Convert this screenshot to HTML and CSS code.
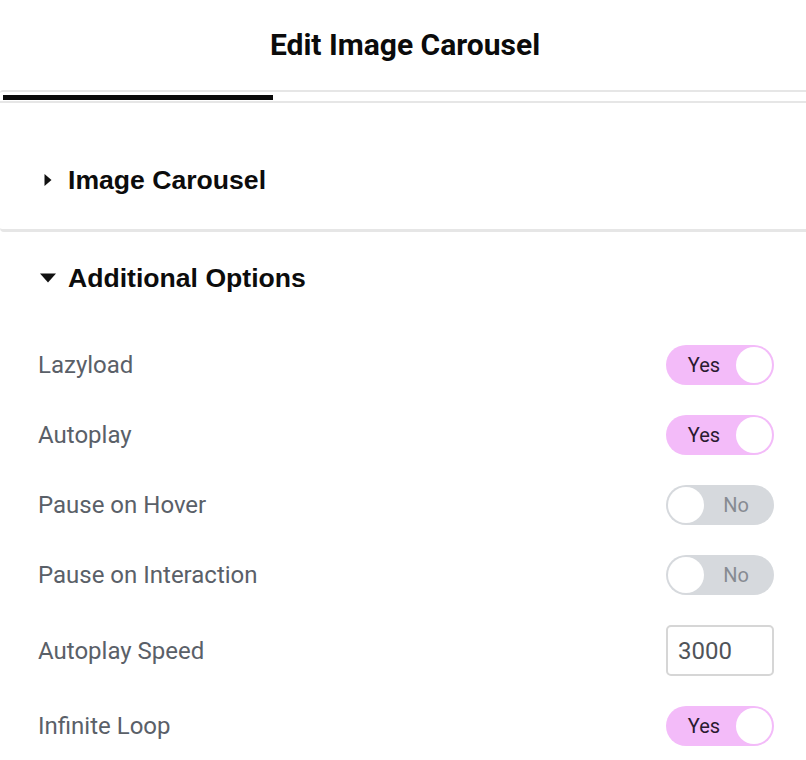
FILE: index.html
```html
<!DOCTYPE html>
<html lang="en">
<head>
<meta charset="utf-8">
<title>Edit Image Carousel</title>
<link rel="stylesheet" href="styles.css">
</head>
<body>
<div class="panel">
  <header class="panel-header">
    <h1 class="panel-title">Edit Image Carousel</h1>
  </header>
  <div class="tabs">
    <div class="tab-indicator"></div>
  </div>

  <section class="section section-collapsed">
    <h2 class="section-title">
      <svg class="caret caret-right" width="8" height="12" viewBox="0 0 8 12"><path d="M0.5 0 L7.5 6 L0.5 12 Z" fill="#111"/></svg>
      <span>Image Carousel</span>
    </h2>
  </section>

  <section class="section section-open">
    <h2 class="section-title">
      <svg class="caret caret-down" width="16" height="10" viewBox="0 0 16 10"><path d="M0 0.5 L16 0.5 L8 9.5 Z" fill="#111"/></svg>
      <span>Additional Options</span>
    </h2>

    <div class="controls">
      <div class="row">
        <span class="label">Lazyload</span>
        <div class="switch on"><span class="switch-text">Yes</span><span class="knob"></span></div>
      </div>
      <div class="row">
        <span class="label">Autoplay</span>
        <div class="switch on"><span class="switch-text">Yes</span><span class="knob"></span></div>
      </div>
      <div class="row">
        <span class="label">Pause on Hover</span>
        <div class="switch off"><span class="knob"></span><span class="switch-text">No</span></div>
      </div>
      <div class="row">
        <span class="label">Pause on Interaction</span>
        <div class="switch off"><span class="knob"></span><span class="switch-text">No</span></div>
      </div>
      <div class="row">
        <span class="label">Autoplay Speed</span>
        <div class="number-input">3000</div>
      </div>
      <div class="row">
        <span class="label">Infinite Loop</span>
        <div class="switch on"><span class="switch-text">Yes</span><span class="knob"></span></div>
      </div>
    </div>
  </section>
</div>
</body>
</html>
```

FILE: styles.css
```css
* { box-sizing: border-box; }

html, body {
  margin: 0;
  padding: 0;
  background: #ffffff;
}

body {
  font-family: Roboto, "Liberation Sans", Arial, sans-serif;
  color: #111;
  width: 806px;
  height: 760px;
  overflow: hidden;
}

.panel-header {
  height: 90px;
  display: flex;
  align-items: center;
  justify-content: center;
  padding-left: 4px;
}

.panel-title {
  margin: 0;
  font-family: Roboto, sans-serif;
  font-weight: 700;
  font-size: 30px;
  line-height: 34px;
  color: #0b0b0b;
}

.tabs {
  height: 13px;
  border-top: 2px solid #e6e6e6;
  border-bottom: 2px solid #e6e6e6;
  border-top-left-radius: 3px;
  padding-top: 3px;
}

.tab-indicator {
  width: 270px;
  height: 5px;
  margin-left: 3px;
  background: #0a0a0a;
}

.section {
  padding: 0 32px 0 38px;
}

.section-collapsed {
  height: 129px;
  padding-top: 62px;
  border-bottom: 3px solid #e6e6e6;
  border-bottom-left-radius: 4px;
}

.section-open {
  padding-top: 31px;
}

.section-title {
  margin: 0;
  display: flex;
  align-items: center;
  height: 30px;
  font-family: "Liberation Sans", Arial, sans-serif;
  font-weight: 700;
  font-size: 26.6px;
  color: #0c0c0c;
}

.caret-right {
  margin-left: 6px;
  margin-right: 16px;
}

.caret-down {
  margin-left: 2px;
  margin-right: 12px;
}

.controls {
  margin-top: 52px;
  display: flex;
  flex-direction: column;
  gap: 30px;
}

.row {
  display: flex;
  align-items: center;
  justify-content: space-between;
  min-height: 40px;
}

.label {
  font-size: 24px;
  color: #5a6068;
}

.switch {
  width: 108px;
  height: 40px;
  border-radius: 20px;
  display: flex;
  align-items: center;
  padding: 2px;
}

.switch.on {
  background: #f3bbf9;
}

.switch.off {
  background: #d6d9dd;
}

.knob {
  width: 36px;
  height: 36px;
  border-radius: 50%;
  background: #ffffff;
  flex: none;
}

.switch-text {
  flex: 1;
  text-align: center;
  font-size: 20px;
}

.switch.on .switch-text {
  color: #2a1a30;
  padding-left: 4px;
}

.switch.off .switch-text {
  color: #878b92;
  padding-right: 4px;
}

.number-input {
  width: 108px;
  height: 51px;
  border: 2px solid #d6d6d6;
  border-radius: 5px;
  padding-left: 10px;
  display: flex;
  align-items: center;
  font-size: 24px;
  color: #505459;
}
```
